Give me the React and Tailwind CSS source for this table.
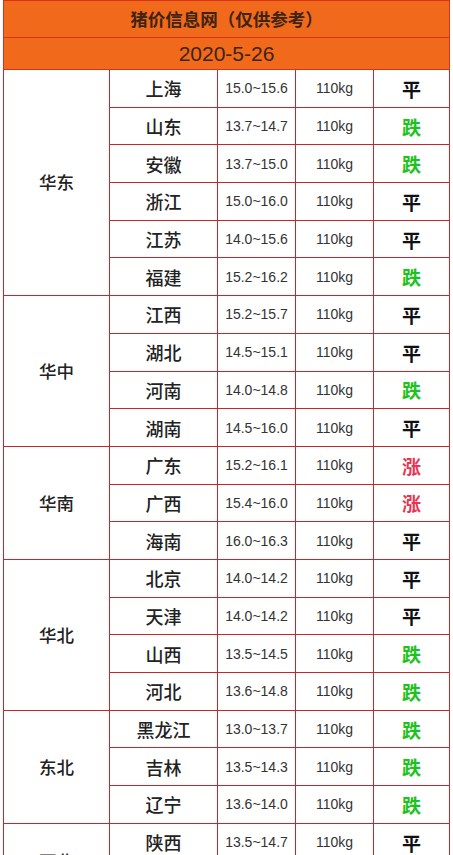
import React from "react";

const regions = [
  { name: "华东", rows: [
    ["上海", "15.0~15.6", "平"],
    ["山东", "13.7~14.7", "跌"],
    ["安徽", "13.7~15.0", "跌"],
    ["浙江", "15.0~16.0", "平"],
    ["江苏", "14.0~15.6", "平"],
    ["福建", "15.2~16.2", "跌"],
  ]},
  { name: "华中", rows: [
    ["江西", "15.2~15.7", "平"],
    ["湖北", "14.5~15.1", "平"],
    ["河南", "14.0~14.8", "跌"],
    ["湖南", "14.5~16.0", "平"],
  ]},
  { name: "华南", rows: [
    ["广东", "15.2~16.1", "涨"],
    ["广西", "15.4~16.0", "涨"],
    ["海南", "16.0~16.3", "平"],
  ]},
  { name: "华北", rows: [
    ["北京", "14.0~14.2", "平"],
    ["天津", "14.0~14.2", "平"],
    ["山西", "13.5~14.5", "跌"],
    ["河北", "13.6~14.8", "跌"],
  ]},
  { name: "东北", rows: [
    ["黑龙江", "13.0~13.7", "跌"],
    ["吉林", "13.5~14.3", "跌"],
    ["辽宁", "13.6~14.0", "跌"],
  ]},
  { name: "西北", rows: [
    ["陕西", "13.5~14.7", "平"],
    ["甘肃", "13.5~14.5", "平"],
  ]},
];

function Status({ s }) {
  if (s === "跌") return <span className="text-[#1ec21e]">{s}</span>;
  if (s === "涨") return <span className="text-[#ea3552]">{s}</span>;
  return <span className="text-[#111]">{s}</span>;
}

export default function App() {
  const font = { fontFamily: '"Liberation Sans", "Noto Sans CJK SC", sans-serif' };
  const cjk = { fontFamily: '"Noto Sans CJK SC", sans-serif' };
  return (
    <div className="h-[855px] w-[453px] overflow-hidden bg-white" style={font}>
      <table className="ml-[3px] w-[446px] border-collapse table-fixed">
        <colgroup>
          <col className="w-[106px]" />
          <col className="w-[108px]" />
          <col className="w-[78px]" />
          <col className="w-[78px]" />
          <col className="w-[76px]" />
        </colgroup>
        <tbody>
          <tr className="h-[37px] bg-[#f1691b]">
            <td colSpan={5} className="border border-[#d8321c] text-center text-[17.5px] font-semibold text-[#3d2414] leading-none" style={cjk}>
              猪价信息网（仅供参考）
            </td>
          </tr>
          <tr className="h-[32px] bg-[#f1691b]">
            <td colSpan={5} className="border border-[#d8321c] text-center text-[21px] text-[#3d2414] leading-none">
              2020-5-26
            </td>
          </tr>
          {regions.map((r) =>
            r.rows.map((row, i) => (
              <tr key={r.name + row[0]} className="h-[37.7px]">
                {i === 0 && (
                  <td rowSpan={r.rows.length} className="border border-[#c9262c] text-center text-[17.5px] font-medium text-[#222]" style={cjk}>
                    {r.name}
                  </td>
                )}
                <td className="border border-[#c9262c] text-center text-[18px] font-medium text-[#222] leading-none" style={cjk}>
                  {row[0]}
                </td>
                <td className="border border-[#c9262c] text-center text-[14px] text-[#333] leading-none">
                  {row[1]}
                </td>
                <td className="border border-[#c9262c] text-center text-[14px] text-[#333] leading-none">
                  110kg
                </td>
                <td className="border border-[#c9262c] text-center text-[19px] font-bold leading-none" style={cjk}>
                  <Status s={row[2]} />
                </td>
              </tr>
            ))
          )}
        </tbody>
      </table>
    </div>
  );
}
